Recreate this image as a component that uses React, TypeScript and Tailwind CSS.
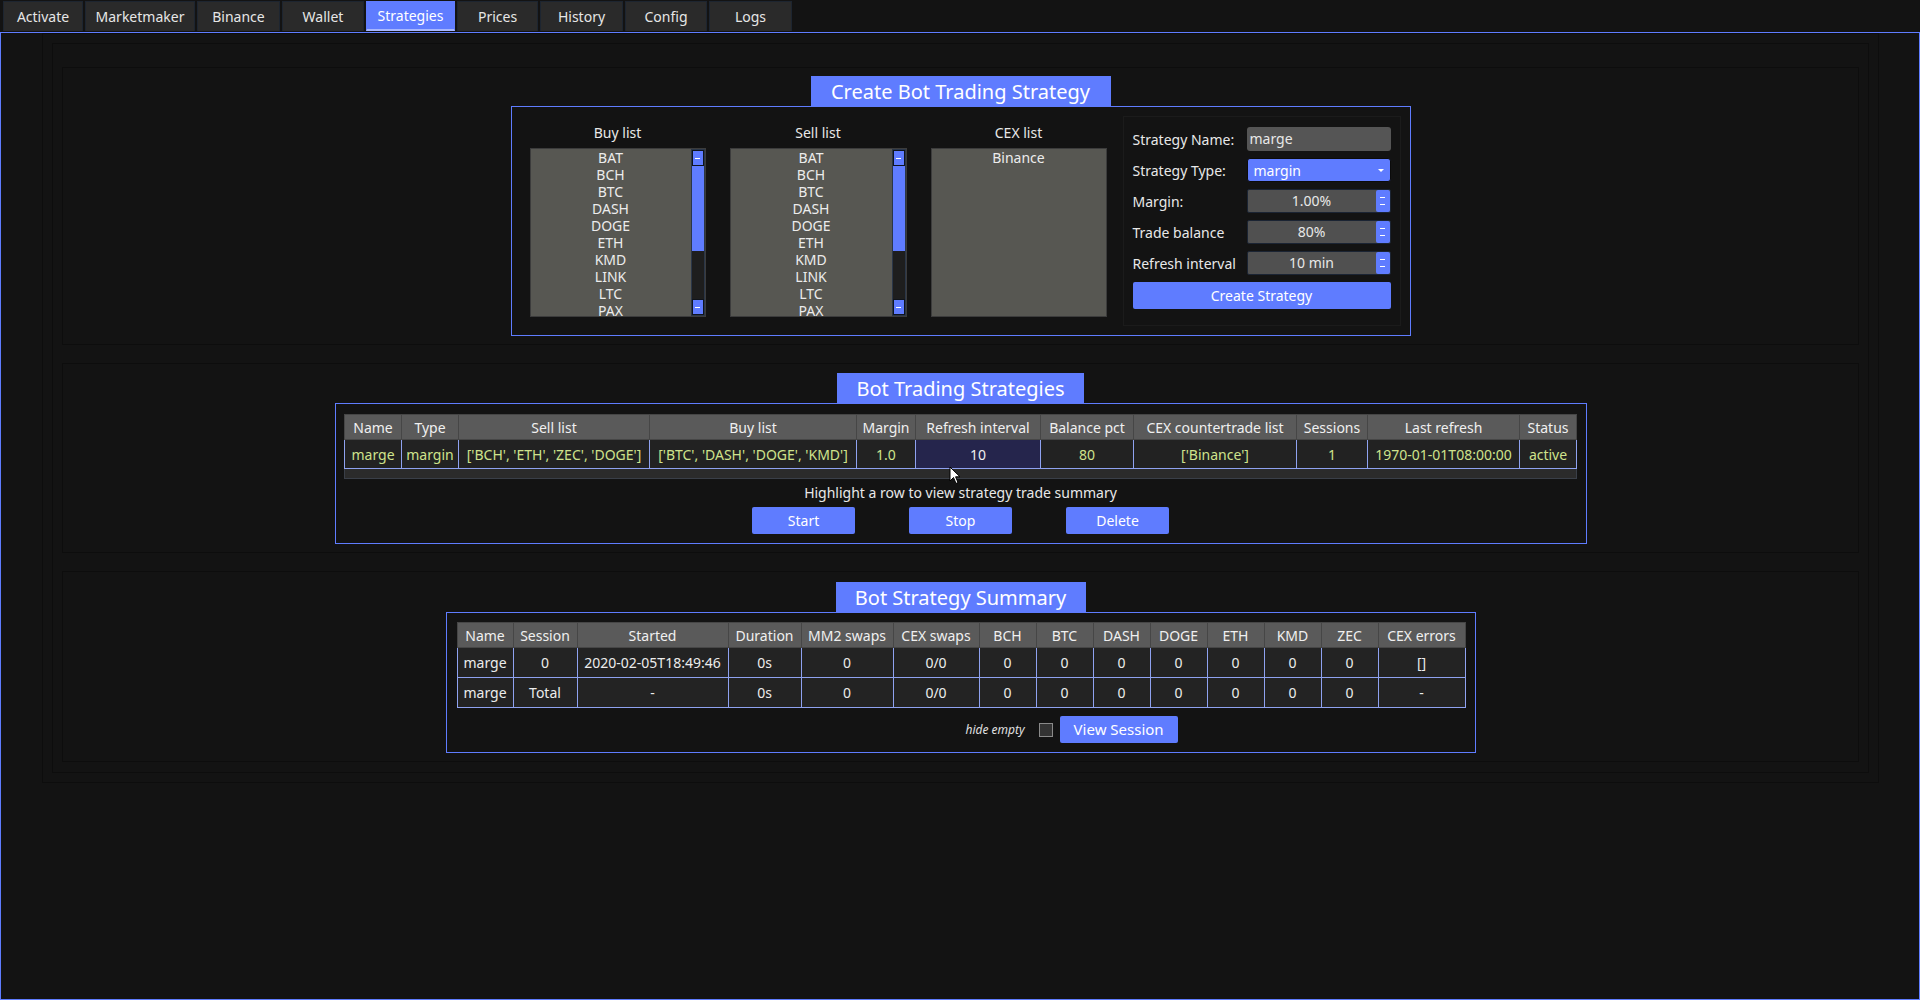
import React from 'react';

const BLUE = 'bg-[#5f7cff]';

const tabs = [
  { label: 'Activate', w: 'w-[80px]' },
  { label: 'Marketmaker', w: 'w-[110px]' },
  { label: 'Binance', w: 'w-[83px]' },
  { label: 'Wallet', w: 'w-[82px]' },
  { label: 'Strategies', w: 'w-[89px]' },
  { label: 'Prices', w: 'w-[81px]' },
  { label: 'History', w: 'w-[83px]' },
  { label: 'Config', w: 'w-[82px]' },
  { label: 'Logs', w: 'w-[83px]' },
];

const coins = ['BAT', 'BCH', 'BTC', 'DASH', 'DOGE', 'ETH', 'KMD', 'LINK', 'LTC', 'PAX'];

function ScrollBtn() {
  return (
    <div className="h-[16px] bg-[#5f7cff] border border-[#10141c] flex items-center justify-center">
      <div className="w-[5px] h-px bg-white" />
    </div>
  );
}

function ListBox({ title, items, scroll, w }: { title: string; items: string[]; scroll?: boolean; w: string }) {
  return (
    <div className={`${w} mt-[16px] flex flex-col`}>
      <div className="h-[20px] leading-[20px] text-center text-[14px] mb-[5px]">{title}</div>
      <div className="h-[169px] border border-[#3c3c3c] bg-[#575752] flex overflow-hidden">
        <div className="flex-1">
          {items.map((c) => (
            <div key={c} className="h-[17px] leading-[17px] text-center text-[14px] text-[#ececec]">
              {c}
            </div>
          ))}
        </div>
        {scroll && (
          <div className="w-[14px] flex flex-col border border-[#2a3648] bg-[#1e1e1e]">
            <ScrollBtn />
            <div className="h-[85px] bg-[#5f7cff]" />
            <div className="flex-1" />
            <ScrollBtn />
          </div>
        )}
      </div>
    </div>
  );
}

function SpinBox({ value }: { value: string }) {
  return (
    <div className="w-[144px] h-[24px] bg-[#505050] border border-[#1b2433] rounded-[2px] flex">
      <div className="flex-1 text-center leading-[22px] text-[14px]">{value}</div>
      <div className="w-[14px] bg-[#5f7cff] rounded-[2px] flex flex-col items-center justify-center gap-[6px]">
        <div className="w-[5px] h-px bg-white" />
        <div className="w-[5px] h-px bg-white" />
      </div>
    </div>
  );
}

function FormRow({ label, children }: { label: string; children: React.ReactNode }) {
  return (
    <div className="flex items-center h-[24px]">
      <div className="w-[114px] text-[14px] whitespace-nowrap">{label}</div>
      {children}
    </div>
  );
}

function SectionTitle({ text, w }: { text: string; w: string }) {
  return (
    <div className={`relative z-10 mx-auto ${w} h-[31px] ${BLUE} text-center leading-[31px] text-[20px] text-white`}>
      {text}
    </div>
  );
}

const stratCols = [
  ['Name', 'w-[57px]'],
  ['Type', 'w-[57px]'],
  ['Sell list', 'w-[191px]'],
  ['Buy list', 'w-[207px]'],
  ['Margin', 'w-[59px]'],
  ['Refresh interval', 'w-[125px]'],
  ['Balance pct', 'w-[93px]'],
  ['CEX countertrade list', 'w-[163px]'],
  ['Sessions', 'w-[71px]'],
  ['Last refresh', 'w-[152px]'],
  ['Status', 'w-[57px]'],
];

const stratRow = [
  'marge',
  'margin',
  "['BCH', 'ETH', 'ZEC', 'DOGE']",
  "['BTC', 'DASH', 'DOGE', 'KMD']",
  '1.0',
  '10',
  '80',
  "['Binance']",
  '1',
  '1970-01-01T08:00:00',
  'active',
];

const sumCols = [
  ['Name', 'w-[56px]'],
  ['Session', 'w-[64px]'],
  ['Started', 'w-[151px]'],
  ['Duration', 'w-[73px]'],
  ['MM2 swaps', 'w-[92px]'],
  ['CEX swaps', 'w-[86px]'],
  ['BCH', 'w-[57px]'],
  ['BTC', 'w-[57px]'],
  ['DASH', 'w-[57px]'],
  ['DOGE', 'w-[57px]'],
  ['ETH', 'w-[57px]'],
  ['KMD', 'w-[57px]'],
  ['ZEC', 'w-[57px]'],
  ['CEX errors', 'w-[87px]'],
];

const sumRows = [
  ['marge', '0', '2020-02-05T18:49:46', '0s', '0', '0/0', '0', '0', '0', '0', '0', '0', '0', '[]'],
  ['marge', 'Total', '-', '0s', '0', '0/0', '0', '0', '0', '0', '0', '0', '0', '-'],
];

function Btn({ children, w }: { children: React.ReactNode; w: string }) {
  return (
    <button className={`${w} h-[27px] ${BLUE} rounded-[2px] text-white text-[14px] leading-[27px] text-center`}>
      {children}
    </button>
  );
}

export default function App() {
  return (
    <div className="relative min-h-screen bg-[#131313] text-[#e8e8e8] font-['Noto_Sans',_'Open_Sans',_sans-serif]">
      {/* tab bar */}
      <div className="h-[32px] flex items-start gap-[2px] pl-[3px] pt-[1px]">
        {tabs.map((t) => {
          const active = t.label === 'Strategies';
          return (
            <div
              key={t.label}
              className={`${t.w} h-[30px] flex items-center justify-center text-[14px] border-x border-t ${
                active
                  ? 'bg-[#5f7cff] border-[#5f7cff] border-b-2 border-b-[#a9b8ff] text-white'
                  : 'bg-[#2a2a2a] border-[#1d2530] text-[#e6e6e6]'
              }`}
            >
              {t.label}
            </div>
          );
        })}
      </div>

      {/* main frame */}
      <div className="h-[968px] border border-[#5f7cff]">
        <div className="ml-[41px] mr-[40px] h-[750px] border border-[#0d0d0d] p-[9px]">
          <div className="h-full border border-[#0d0d0d] pt-[23px] px-[9px] pb-[9px]">
            <div className="flex flex-col gap-[18px]">
              {/* create strategy */}
              <div className="border border-[#0d0d0d] pt-[8px] pb-[8px]">
                <SectionTitle text="Create Bot Trading Strategy" w="w-[300px]" />
                <div className="-mt-px mx-auto w-[900px] h-[230px] border border-[#5f7cff] flex items-start pl-[18px] gap-[24px]">
                  <ListBox title="Buy list" items={coins} scroll w="w-[176px]" />
                  <ListBox title="Sell list" items={coins} scroll w="w-[177px]" />
                  <ListBox title="CEX list" items={['Binance']} w="w-[176px]" />
                  <div className="-ml-[8px] mt-[9px] w-[278px] h-[210px] border border-[#1b1b1b] pt-[10px] pl-[9px] pr-[8px] flex flex-col gap-[7px]">
                    <FormRow label="Strategy Name:">
                      <div className="w-[144px] h-[24px] bg-[#555555] rounded-[3px] pl-[3px] leading-[24px] text-[14px]">marge</div>
                    </FormRow>
                    <FormRow label="Strategy Type:">
                      <div className="w-[144px] h-[24px] bg-[#5f7cff] border border-[#0b0b0b] rounded-[3px] pl-[6px] pr-[6px] flex items-center justify-between text-[14px] text-white">
                        <span>margin</span>
                        <span className="w-0 h-0 border-l-[3px] border-r-[3px] border-t-[3px] border-l-transparent border-r-transparent border-t-white" />
                      </div>
                    </FormRow>
                    <FormRow label="Margin:">
                      <SpinBox value="1.00%" />
                    </FormRow>
                    <FormRow label="Trade balance">
                      <SpinBox value="80%" />
                    </FormRow>
                    <FormRow label="Refresh interval">
                      <SpinBox value="10 min" />
                    </FormRow>
                    <button className={`w-[258px] h-[27px] ${BLUE} rounded-[2px] text-white text-[14px]`}>Create Strategy</button>
                  </div>
                </div>
              </div>

              {/* strategies */}
              <div className="border border-[#0d0d0d] pt-[9px] pb-[8px]">
                <SectionTitle text="Bot Trading Strategies" w="w-[247px]" />
                <div className="-mt-px mx-auto w-[1252px] border border-[#5f7cff] pt-[10px] px-[9px] pb-[9px] flex flex-col items-center">
                  <div className="relative">
                    <table className="table-fixed border-collapse w-[1232px] text-[14px] border border-[#444]">
                      <thead>
                        <tr>
                          {stratCols.map(([c, w]) => (
                            <th key={c} className={`${w} h-[25px] bg-[#5a5a5a] border border-[#464646] font-normal text-[#f0f0f0] whitespace-nowrap p-0`}>
                              {c}
                            </th>
                          ))}
                        </tr>
                      </thead>
                      <tbody>
                        <tr>
                          {stratRow.map((v, i) => (
                            <td
                              key={i}
                              className={`h-[29px] border border-[#8fa2f0] text-center whitespace-nowrap p-0 ${
                                i === 5 ? 'bg-[#25254c] text-[#f0f0f0]' : 'bg-[#222222] text-[#cfe38c]'
                              }`}
                            >
                              {v}
                            </td>
                          ))}
                        </tr>
                        <tr>
                          <td colSpan={11} className="h-[10px] bg-[#2b2b2b] border border-[#3a3f48] p-0" />
                        </tr>
                      </tbody>
                    </table>
                    {/* mouse pointer */}
                    <svg className="absolute left-[605px] top-[52px]" width="12" height="19" viewBox="0 0 12 19">
                      <path d="M1 1 L1 15 L4.5 11.5 L7 17.5 L9 16.5 L6.6 10.8 L11 10.8 Z" fill="#fff" stroke="#000" strokeWidth="1" strokeLinejoin="round" />
                    </svg>
                  </div>
                  <div className="mt-[4px] h-[20px] leading-[20px] text-[14px]">Highlight a row to view strategy trade summary</div>
                  <div className="mt-[4px] flex gap-[54px]">
                    <Btn w="w-[103px]">Start</Btn>
                    <Btn w="w-[103px]">Stop</Btn>
                    <Btn w="w-[103px]">Delete</Btn>
                  </div>
                </div>
              </div>

              {/* summary */}
              <div className="border border-[#0d0d0d] pt-[10px] pb-[8px]">
                <SectionTitle text="Bot Strategy Summary" w="w-[250px]" />
                <div className="-mt-px mx-auto w-[1030px] border border-[#5f7cff] pt-[9px] px-[10px] pb-[9px]">
                  <table className="table-fixed border-collapse w-[1008px] text-[14px] border border-[#555]">
                    <thead>
                      <tr>
                        {sumCols.map(([c, w]) => (
                          <th key={c} className={`${w} h-[25px] bg-[#5a5a5a] border border-[#464646] font-normal text-[#f0f0f0] whitespace-nowrap p-0`}>
                            {c}
                          </th>
                        ))}
                      </tr>
                    </thead>
                    <tbody>
                      {sumRows.map((r, ri) => (
                        <tr key={ri}>
                          {r.map((v, i) => (
                            <td
                              key={i}
                              className="h-[30px] bg-[#232323] border border-[#8fa2f0] text-center whitespace-nowrap p-0 text-[#ececec]"
                            >
                              {v}
                            </td>
                          ))}
                        </tr>
                      ))}
                    </tbody>
                  </table>
                  <div className="mt-[8px] flex items-center pl-[509px]">
                    <span className="italic text-[12px] text-[#e0e0e0]">hide empty</span>
                    <span className="ml-[14px] w-[14px] h-[14px] bg-[#333333] border border-[#8a8a8a]" />
                    <button className={`ml-[7px] w-[118px] h-[27px] ${BLUE} rounded-[2px] text-white text-[15px]`}>View Session</button>
                  </div>
                </div>
              </div>
            </div>
          </div>
        </div>
      </div>
    </div>
  );
}
